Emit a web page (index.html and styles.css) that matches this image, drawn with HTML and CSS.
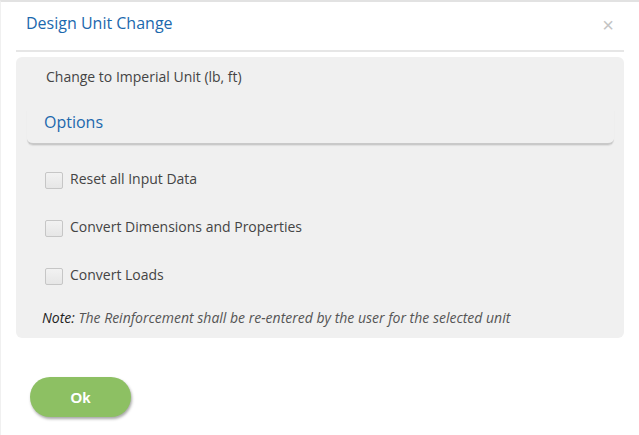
FILE: index.html
```html
<!DOCTYPE html>
<html>
<head>
<meta charset="utf-8">
<link rel="stylesheet" href="styles.css">
</head>
<body>
<div class="modal">
  <div class="header">
    <h1 class="title">Design Unit Change</h1>
    <span class="close">×</span>
  </div>
  <div class="panel">
    <p class="subtitle">Change to Imperial Unit (lb, ft)</p>
    <div class="options-head">
      <h2 class="options-title">Options</h2>
    </div>
    <div class="opt-list">
      <label class="opt"><span class="box"></span><span class="opt-text">Reset all Input Data</span></label>
      <label class="opt"><span class="box"></span><span class="opt-text">Convert Dimensions and Properties</span></label>
      <label class="opt"><span class="box"></span><span class="opt-text">Convert Loads</span></label>
    </div>
    <p class="note"><span class="note-label">Note:</span> The Reinforcement shall be re-entered by the user for the selected unit</p>
  </div>
  <div class="footer">
    <button class="ok">Ok</button>
  </div>
</div>
</body>
</html>
```
FILE: styles.css
```css
* { box-sizing: border-box; }
html, body { margin: 0; padding: 0; background: #fff; }
body { font-family: "Open Sans", "Noto Sans", sans-serif; }
.modal {
  width: 639px;
  height: 435px;
  border-top: 2px solid #e2e2e2;
  border-left: 1px solid #f0f0f0;
}
.header {
  display: flex;
  align-items: flex-start;
  justify-content: space-between;
  height: 50px;
  margin: 0 15px 0 15px;
  padding: 9px 10px 0 10px;
  border-bottom: 2px solid #e6e6e6;
}
.title {
  margin: 0;
  font-size: 16px;
  font-weight: 400;
  color: #1c68ad;
  line-height: 24px;
}
.close {
  font-size: 20px;
  color: #c4c4c4;
  line-height: 20px;
  font-family: "Liberation Sans", Arial, sans-serif;
  margin-top: 4px;
}
.panel {
  margin: 5px 15px 0 15px;
  background: #f0f0f0;
  border-radius: 6px;
  padding: 10px 0 10px 0;
}
.subtitle {
  margin: 0;
  padding-left: 30px;
  font-size: 14px;
  line-height: 20px;
  color: #444;
}
.options-head {
  margin: 23px 10px 0 11px;
  padding: 0 0 9px 17px;
  border-bottom: 2px solid #c9c9c9;
  border-radius: 0 0 6px 6px;
  box-shadow: 0 1px 1px #dedede;
}
.options-title {
  margin: 0;
  font-size: 16px;
  font-weight: 400;
  line-height: 24px;
  color: #1c68ad;
}
.opt-list {
  display: flex;
  flex-direction: column;
  padding: 11px 0 0 29px;
}
.opt {
  display: flex;
  align-items: center;
  gap: 7px;
  height: 48px;
}
.box {
  width: 18px;
  height: 17px;
  border: 1px solid #c6c6c6;
  border-radius: 2px;
  background: linear-gradient(#f2f2f2, #e6e6e6);
}
.opt-text {
  font-size: 14px;
  color: #444;
  line-height: 20px;
  margin-top: -3px;
}
.note {
  margin: 8px 0 0 0;
  padding-left: 26px;
  font-size: 14px;
  line-height: 20px;
  font-style: italic;
  color: #555;
}
.note-label { color: #222; }
.footer {
  padding: 39px 0 0 29px;
}
.ok {
  width: 101px;
  height: 40px;
  border: none;
  border-radius: 20px;
  background: #8dc063;
  color: #fff;
  font-family: "Liberation Sans", Arial, sans-serif;
  font-weight: 700;
  font-size: 15px;
  box-shadow: 1px 2px 3px rgba(0, 0, 0, 0.35);
}
```
